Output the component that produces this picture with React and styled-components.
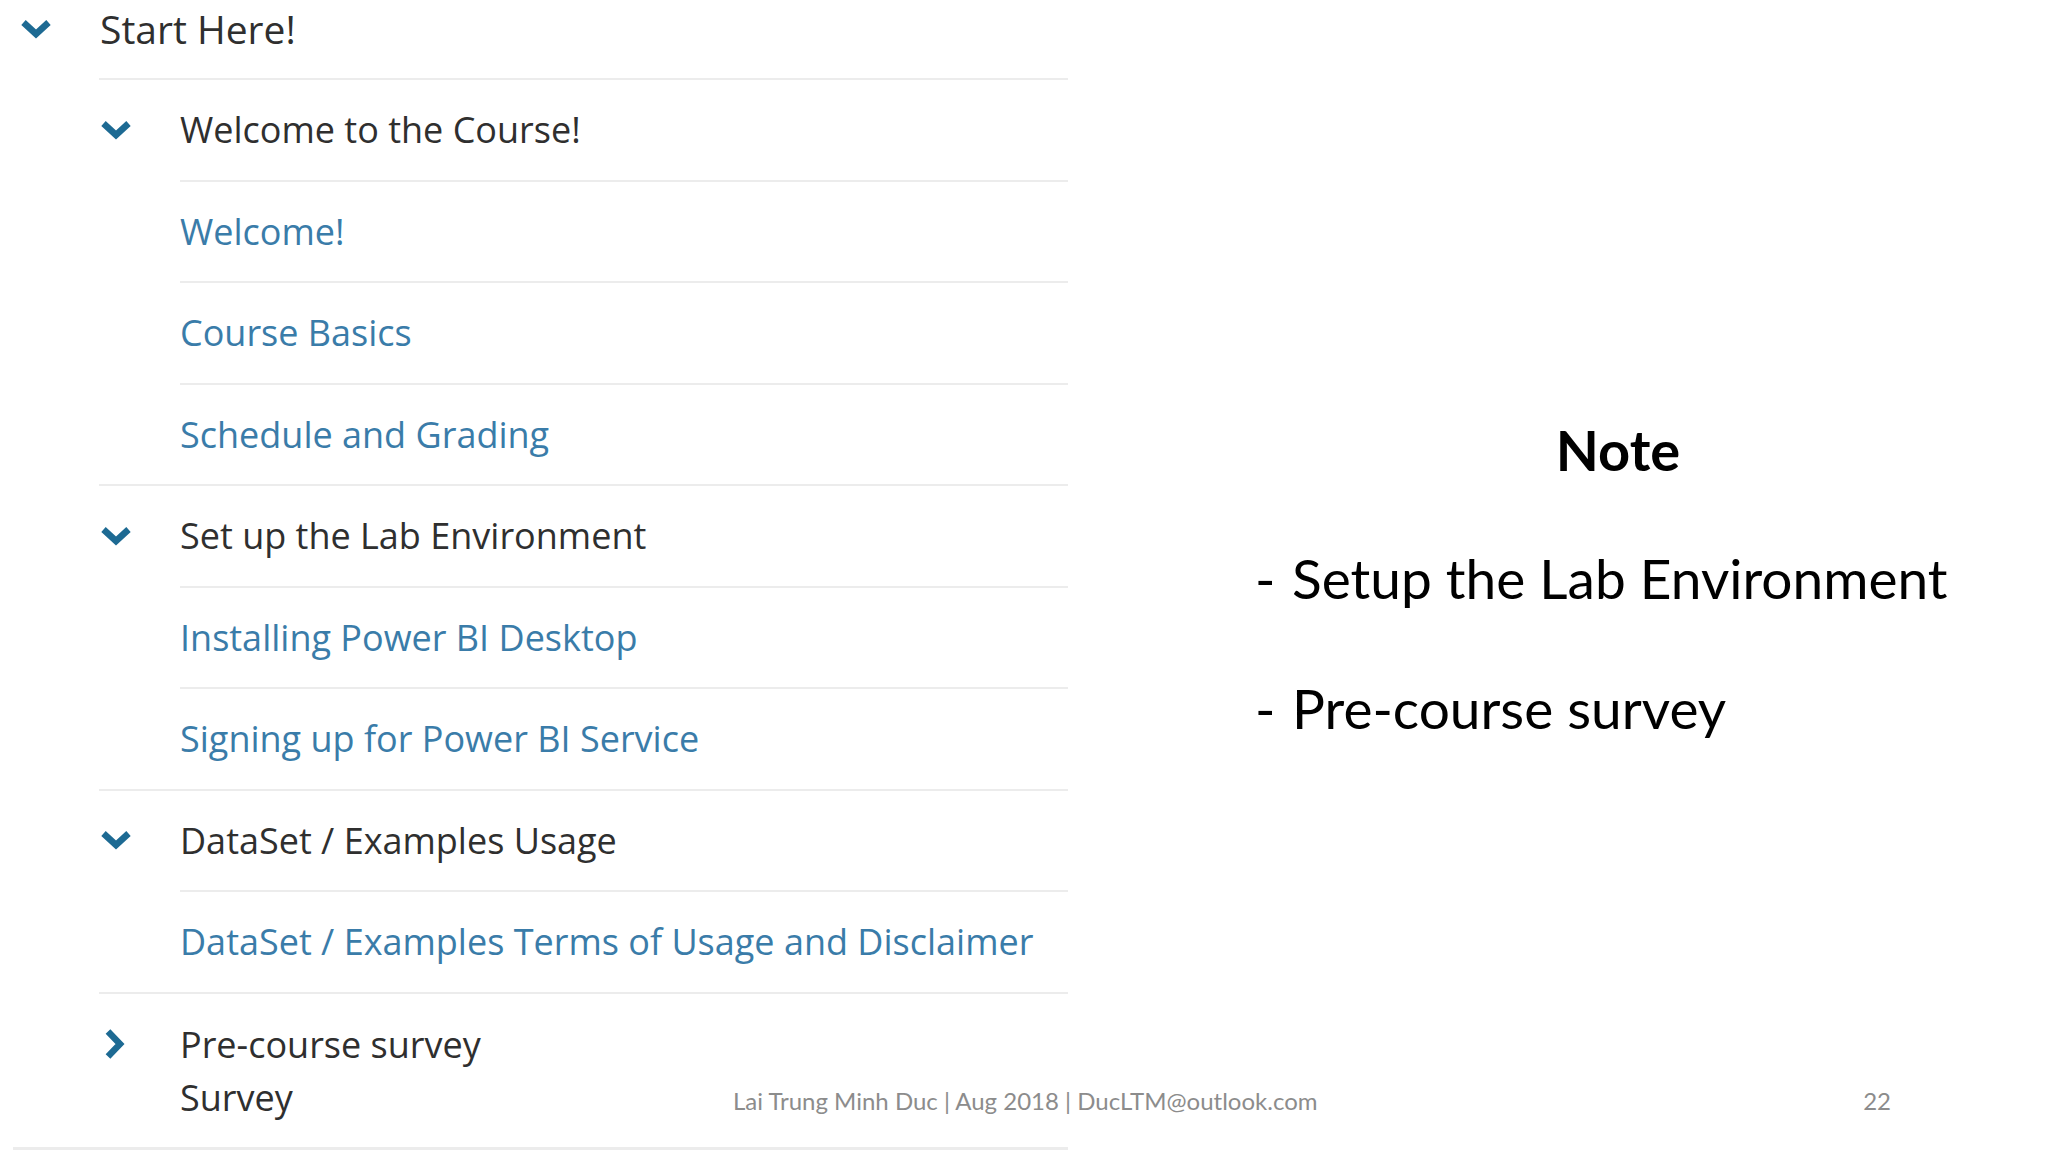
import React from "react";
import styled, { createGlobalStyle } from "styled-components";

const GlobalStyle = createGlobalStyle`
  html, body {
    margin: 0;
    padding: 0;
    background: #ffffff;
  }
  * { box-sizing: border-box; }
`;

const sections = [
  {
    title: "Welcome to the Course!",
    open: true,
    items: ["Welcome!", "Course Basics", "Schedule and Grading"],
  },
  {
    title: "Set up the Lab Environment",
    open: true,
    items: ["Installing Power BI Desktop", "Signing up for Power BI Service"],
  },
  {
    title: "DataSet / Examples Usage",
    open: true,
    items: ["DataSet / Examples Terms of Usage and Disclaimer"],
  },
  { title: "Pre-course survey", sub: "Survey", open: false, items: [] },
];

const ChevronDown = ({ w = 32, h = 20 }) => (
  <svg width={w} height={h} viewBox="0 0 32 20">
    <polyline
      points="3.5,3.5 16,15 28.5,3.5"
      fill="none"
      stroke="#1d6a93"
      strokeWidth="6.5"
      strokeLinejoin="miter"
    />
  </svg>
);

const ChevronRight = () => (
  <svg width="22" height="32" viewBox="0 0 22 32">
    <polyline
      points="4,3.5 16,16 4,28.5"
      fill="none"
      stroke="#1d6a93"
      strokeWidth="6.5"
      strokeLinejoin="miter"
    />
  </svg>
);

export default function App() {
  return (
    <>
      <GlobalStyle />
      <Slide>
        <Outline>
          <Module>
            <ModuleHeader>
              <Caret $pad={7}>
                <ChevronDown />
              </Caret>
              <ModuleTitle>Start Here!</ModuleTitle>
            </ModuleHeader>

            <SectionList>
              {sections.map((s) => (
                <Section key={s.title}>
                  <SectionHeader $tall={!!s.sub}>
                    <Caret $pad={s.open ? 1 : 5} $top={!!s.sub}>
                      {s.open ? <ChevronDown /> : <ChevronRight />}
                    </Caret>
                    <div>
                      <SectionTitle>{s.title}</SectionTitle>
                      {s.sub && <SectionTitle>{s.sub}</SectionTitle>}
                    </div>
                  </SectionHeader>
                  {s.items.map((it) => (
                    <Item key={it}>{it}</Item>
                  ))}
                </Section>
              ))}
            </SectionList>
          </Module>
        </Outline>

        <NotePanel>
          <NoteTitle>Note</NoteTitle>
          <Bullets>
            <Bullet>
              <Dash>-</Dash>
              <span>Setup the Lab Environment</span>
            </Bullet>
            <Bullet>
              <Dash>-</Dash>
              <span>Pre-course survey</span>
            </Bullet>
          </Bullets>
        </NotePanel>

        <Footer>
          <FooterText>Lai Trung Minh Duc | Aug 2018 | DucLTM@outlook.com</FooterText>
          <PageNum>22</PageNum>
        </Footer>
      </Slide>
    </>
  );
}

// ================= STYLED COMPONENTS =================

const Slide = styled.div`
  position: relative;
  width: 2048px;
  height: 1152px;
  overflow: hidden;
  display: flex;
  background: #ffffff;
`;

const Outline = styled.div`
  width: 1068px;
  flex-shrink: 0;
  padding-left: 13px;
  font-family: "Open Sans", "Noto Sans", sans-serif;
`;

const Module = styled.div`
  border-bottom: 3px solid #ececec;
`;

const ModuleHeader = styled.div`
  display: grid;
  grid-template-columns: 87px 1fr;
  align-items: center;
  height: 78px;
  padding-bottom: 21px;
`;

const Caret = styled.div`
  display: flex;
  padding-left: ${(p) => p.$pad}px;
  align-self: ${(p) => (p.$top ? "start" : "center")};
  margin-top: ${(p) => (p.$top ? "10px" : "0")};
`;

const ModuleTitle = styled.div`
  font-size: 39px;
  color: #2f2f2f;
  line-height: 1;
`;

const SectionList = styled.div`
  margin-left: 86px;
`;

const Section = styled.div`
  border-top: 2px solid #ececec;
`;

const SectionHeader = styled.div`
  display: grid;
  grid-template-columns: 81px 1fr;
  align-items: center;
  min-height: 99.5px;
  padding: ${(p) => (p.$tall ? "24px 0 23px" : "0")};
`;

const SectionTitle = styled.div`
  font-size: 36px;
  color: #2f2f2f;
  line-height: 53px;
`;

const Item = styled.div`
  margin-left: 81px;
  border-top: 2px solid #ececec;
  height: 101.5px;
  display: flex;
  align-items: center;
  font-size: 36px;
  color: #3a7ca9;
`;

const NotePanel = styled.div`
  margin-left: 186px;
  width: 730px;
  padding-top: 410px;
  font-family: "Lato", "Liberation Sans", sans-serif;
  color: #000;
`;

const NoteTitle = styled.div`
  text-align: center;
  font-weight: 700;
  font-size: 56px;
  line-height: 80px;
  margin-right: 2px;
`;

const Bullets = styled.div`
  display: flex;
  flex-direction: column;
  gap: 50px;
  margin-top: 48px;
`;

const Bullet = styled.div`
  display: flex;
  font-size: 55px;
  line-height: 80px;
`;

const Dash = styled.span`
  width: 38px;
  padding-left: 1px;
`;

const Footer = styled.div`
  position: absolute;
  left: 0;
  right: 0;
  top: 1083px;
  height: 34px;
  display: flex;
  align-items: center;
  font-family: "Lato", "Liberation Sans", sans-serif;
  color: #8c8c8c;
  font-size: 24px;
`;

const FooterText = styled.div`
  margin-left: 733px;
`;

const PageNum = styled.div`
  margin-left: auto;
  margin-right: 157px;
`;
